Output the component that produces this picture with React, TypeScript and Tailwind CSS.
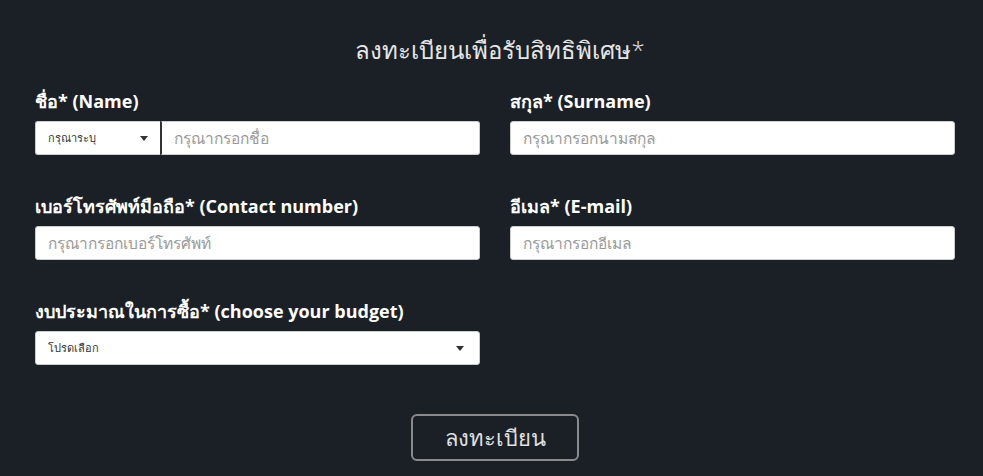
const FONT = "font-['Open_Sans','Noto_Sans','Noto_Sans_CJK_SC',sans-serif]";

function Caret() {
  return (
    <span className="ml-auto h-0 w-0 border-x-[4px] border-t-[5px] border-x-transparent border-t-[#333]" />
  );
}

function Label({ children }: { children: React.ReactNode }) {
  return <label className="block text-[18px] font-bold leading-[24px] text-white">{children}</label>;
}

function TextField({ placeholder }: { placeholder: string }) {
  return (
    <input
      placeholder={placeholder}
      className="h-[34px] w-full rounded-[3px] border border-[#ccc] bg-white px-3 text-[15.5px] text-[#333] placeholder:text-[#9a9a9a] outline-none"
    />
  );
}

export default function App() {
  return (
    <div className={`min-h-[476px] w-full bg-[#1b2027] ${FONT}`}>
      <div className="pl-[35px] pt-[34px]">
        <h1 className="w-[920px] pl-[10px] text-center text-[24px] font-light leading-[32px] text-[#e6e6e6]">
          ลงทะเบียนเพื่อรับสิทธิพิเศษ*
        </h1>

        <div className="mt-[23px] grid grid-cols-[445px_445px] gap-x-[30px] gap-y-[39px]">
          <div>
            <Label>ชื่อ* (Name)</Label>
            <div className="mt-[8px] flex h-[34px]">
              <div className="flex w-[125px] items-center rounded-l-[3px] border border-r-0 border-[#ccc] bg-white px-[12px] text-[11px] text-[#333]">
                <span>กรุณาระบุ</span>
                <Caret />
              </div>
              <input
                placeholder="กรุณากรอกชื่อ"
                className="h-[34px] min-w-0 flex-1 rounded-r-[3px] border border-l-2 border-[#ccc] border-l-[#333] bg-white px-3 text-[15.5px] text-[#333] placeholder:text-[#9a9a9a] outline-none"
              />
            </div>
          </div>
          <div>
            <Label>สกุล* (Surname)</Label>
            <div className="mt-[8px]">
              <TextField placeholder="กรุณากรอกนามสกุล" />
            </div>
          </div>

          <div>
            <Label>เบอร์โทรศัพท์มือถือ* (Contact number)</Label>
            <div className="mt-[8px]">
              <TextField placeholder="กรุณากรอกเบอร์โทรศัพท์" />
            </div>
          </div>
          <div>
            <Label>อีเมล* (E-mail)</Label>
            <div className="mt-[8px]">
              <TextField placeholder="กรุณากรอกอีเมล" />
            </div>
          </div>

          <div>
            <Label>งบประมาณในการซื้อ* (choose your budget)</Label>
            <div className="mt-[8px] flex h-[34px] items-center rounded-[3px] border border-[#ccc] bg-white pl-[12px] pr-[15px] text-[11px] text-[#333]">
              <span>โปรดเลือก</span>
              <Caret />
            </div>
          </div>
        </div>

        <div className="mt-[49px] flex w-[920px] justify-center">
          <button className="h-[47px] w-[168px] rounded-[6px] border-2 border-[#8a8a8a] text-[22px] text-[#e0e0e0]">
            ลงทะเบียน
          </button>
        </div>
      </div>
    </div>
  );
}
